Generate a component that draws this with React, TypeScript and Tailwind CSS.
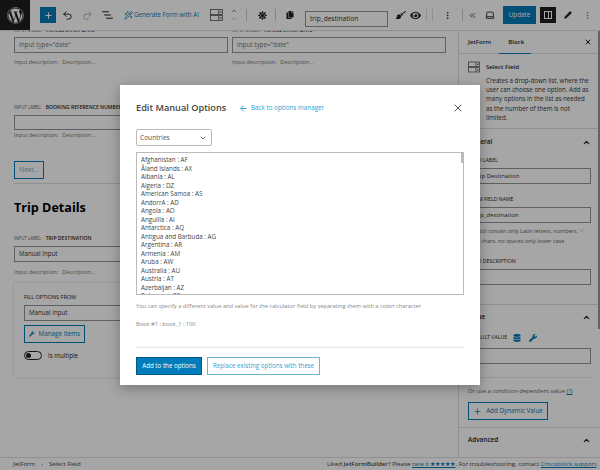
import { Undo2, Redo2, WandSparkles, ChevronUp, ChevronDown, ChevronsLeft, Laptop, EllipsisVertical, X, ArrowLeft, Plus, Pencil } from "lucide-react";
import { FaWordpress, FaWrench, FaDatabase, FaBroom, FaEye, FaSun, FaCopy } from "react-icons/fa";

const COUNTRIES = [
  "Afghanistan : AF",
  "Åland Islands : AX",
  "Albania : AL",
  "Algeria : DZ",
  "American Samoa : AS",
  "AndorrA : AD",
  "Angola : AO",
  "Anguilla : AI",
  "Antarctica : AQ",
  "Antigua and Barbuda : AG",
  "Argentina : AR",
  "Armenia : AM",
  "Aruba : AW",
  "Australia : AU",
  "Austria : AT",
  "Azerbaijan : AZ",
  "Bahamas : BS",
];

// Two stacked rows with a small box each, used for the field block icon
function FieldIcon({ className }: { className: string }) {
  return (
    <svg viewBox="0 0 24 22" className={className} fill="none" stroke="currentColor" strokeWidth="1.5">
      <rect x="1" y="1" width="22" height="9" />
      <rect x="1" y="12" width="22" height="9" />
      <path d="M16 1v9M16 12v9" />
      <path d="M18 4l3 3M21 4l-3 3M18 15l3 3M21 15l-3 3" />
    </svg>
  );
}

function ListViewIcon() {
  return (
    <svg viewBox="0 0 16 12" className="w-[11px] h-[8px]" fill="none" stroke="currentColor" strokeWidth="1.6">
      <path d="M0 1h10M3 6h10M6 11h10" />
    </svg>
  );
}

function FieldLabel({ children }: { children: string }) {
  return (
    <div className="flex gap-[4px] leading-[8px] whitespace-nowrap">
      <span className="text-[4.4px] text-[#666]">INPUT LABEL:</span>
      <span className="text-[5.1px] font-semibold text-[#1e1e1e]">{children}</span>
    </div>
  );
}

function Description() {
  return (
    <div className="flex gap-[4px] text-[5.4px] leading-[8px] text-[#757575]">
      <span>Input description:</span>
      <span>Description...</span>
    </div>
  );
}

function DateField() {
  return (
    <div className="w-[214px] shrink-0">
      <FieldLabel>TRAVEL START DATE</FieldLabel>
      <div className="mt-[3px] h-[16px] border border-[#949494] px-[4px] flex items-center text-[6.3px] text-[#757575]">
        Input type="date"
      </div>
      <div className="mt-[5px]">
        <Description />
      </div>
    </div>
  );
}

function TopBar() {
  return (
    <header className="h-[31px] shrink-0 flex items-center border-b border-[#ddd] bg-white text-[#1e1e1e]">
      <div className="w-[30px] h-[30px] bg-[#1e1e1e] flex items-center justify-center text-white">
        <FaWordpress size={17} />
      </div>
      <div className="ml-[10px] w-[16px] h-[16px] bg-[#007cba] flex items-center justify-center text-white">
        <Plus size={9} strokeWidth={3} />
      </div>
      <Undo2 size={11} className="ml-[6px]" />
      <Redo2 size={11} className="ml-[9px] text-[#aaa]" />
      <div className="ml-[9px] flex">
        <ListViewIcon />
      </div>
      <WandSparkles size={9} className="ml-[11px] text-[#007cba]" />
      <span className="ml-[1px] w-[64px] text-[6.2px] text-[#007cba] whitespace-nowrap">Generate Form with AI</span>
      <FieldIcon className="ml-[12px] w-[13px] h-[12px] text-[#555]" />
      <div className="ml-[7px] flex flex-col items-center text-[#555]">
        <ChevronUp size={8} />
        <ChevronDown size={8} className="text-[#aaa]" />
      </div>
      <div className="ml-[8px] w-px h-[12px] bg-[#ccc]" />
      <FaSun size={9} className="ml-[11px]" />
      <div className="ml-[8px] w-px h-[12px] bg-[#ccc]" />
      <FaCopy size={8} className="ml-[10px]" />
      <div className="ml-[11px] mt-[7px] w-[83px] h-[16px] border border-[#949494] px-[4px] flex items-center text-[6.6px] text-[#333]">
        trip_destination
      </div>
      <FaBroom size={10} className="ml-[8px]" />
      <FaEye size={11} className="ml-[4px] text-[#333]" />
      <div className="ml-[5px] w-px h-[12px] bg-[#ddd]" />
      <div className="ml-[5px] w-px h-[12px] bg-[#ddd]" />
      <EllipsisVertical size={9} className="ml-[10px]" />
      <div className="ml-[10px] w-px h-[12px] bg-[#ccc]" />
      <ChevronsLeft size={9} className="ml-[5px]" />
      <Laptop size={10} className="ml-[8px]" />
      <div className="ml-[8px] w-[33px] h-[18px] bg-[#007cba] text-white text-[6.3px] flex items-center justify-center">
        Update
      </div>
      <div className="ml-[4px] w-[16px] h-[16px] bg-[#1e1e1e] flex items-center justify-center">
        <div className="w-[8px] h-[8px] border border-white flex justify-end">
          <div className="w-[3px] border-l border-white" />
        </div>
      </div>
      <Pencil size={8} className="ml-[8px]" fill="currentColor" />
      <EllipsisVertical size={9} className="ml-[11px] text-[#777]" />
    </header>
  );
}

function Editor() {
  return (
    <main className="w-[459px] shrink-0 overflow-hidden px-[14px] border-r border-[#ddd] bg-white">
      <div className="-mt-[5px] flex gap-[4px]">
        <DateField />
        <DateField />
      </div>
      <div className="mt-[37px]">
        <FieldLabel>BOOKING REFERENCE NUMBER</FieldLabel>
      </div>
      <div className="mt-[4px] w-[300px] h-[15px] border border-[#949494]" />
      <div className="mt-[1px]">
        <Description />
      </div>
      <div className="mt-[22px] w-[30px] h-[18px] border border-[#007cba] flex items-center justify-center text-[6.5px] text-[#7a9fb5]">
        Next...
      </div>
      <div className="mt-[4px] h-px bg-[#ddd]" />
      <h2 className="mt-[14px] text-[12.6px] leading-[20px] font-bold text-black">Trip Details</h2>
      <div className="mt-[16px]">
        <FieldLabel>TRIP DESTINATION</FieldLabel>
      </div>
      <div className="mt-[4px] h-[16px] border border-[#949494] px-[4px] flex items-center text-[6.2px] text-[#333]">
        Manual Input
      </div>
      <div className="mt-[6px]">
        <Description />
      </div>
      <section className="mt-[7px] h-[94px] px-[10px] pt-[10px] shadow-[0_0_3px_rgba(0,0,0,0.15)]">
        <div className="text-[5.5px] leading-[8px] text-[#1e1e1e]">FILL OPTIONS FROM</div>
        <div className="mt-[4px] h-[16px] border border-[#949494] px-[4px] flex items-center text-[6.2px] text-[#333]">
          Manual Input
        </div>
        <div className="mt-[4px] w-[61px] h-[18px] border border-[#007cba] flex items-center gap-[4px] px-[4px] text-[6.3px] text-[#007cba] whitespace-nowrap">
          <FaWrench size={8} />
          Manage Items
        </div>
        <div className="mt-[8px] flex items-center gap-[6px]">
          <div className="w-[18px] h-[9px] rounded-full border border-[#1e1e1e] flex items-center px-[1px]">
            <div className="w-[5px] h-[5px] rounded-full bg-[#1e1e1e]" />
          </div>
          <span className="text-[6.2px] text-[#1e1e1e]">Is multiple</span>
        </div>
      </section>
    </main>
  );
}

function SidebarInput({ value }: { value?: string }) {
  return (
    <div className="mt-[4px] h-[16px] border border-[#949494] px-[5px] flex items-center text-[6.1px] text-[#333] whitespace-nowrap">
      {value}
    </div>
  );
}

function SectionHead({ title }: { title: string }) {
  return (
    <div className="flex items-center justify-between text-[6.4px] leading-[12px] font-semibold text-[#1e1e1e]">
      {title}
      <ChevronUp size={9} strokeWidth={3} />
    </div>
  );
}

function Sidebar() {
  return (
    <aside className="relative flex-1 min-w-0 overflow-hidden bg-white text-[#1e1e1e]">
      <div className="h-[23px] flex items-center border-b border-[#ddd] pl-[9px] pr-[8px] text-[6.1px] font-semibold">
        <span>JetForm</span>
        <span className="relative ml-[17px] h-full flex items-center">
          Block
          <span className="absolute -left-[9px] -right-[7px] -bottom-px h-px bg-[#007cba]" />
        </span>
        <X size={8} strokeWidth={3} className="ml-auto" />
      </div>
      <div className="h-[75px] pl-[9px] pr-[5px] pt-[7px] flex gap-[6px] border-b border-[#ddd]">
        <FieldIcon className="w-[12px] h-[12px] shrink-0 text-[#555]" />
        <div>
          <div className="text-[6.1px] leading-[12px] font-semibold">Select Field</div>
          <p className="mt-[3px] text-[6.2px] leading-[9.2px] text-[#333] whitespace-nowrap">
            Creates a drop-down list, where the
            <br />
            user can choose one option. Add as
            <br />
            many options in the list as needed
            <br />
            as the number of them is not
            <br />
            limited.
          </p>
        </div>
      </div>
      <div className="px-[9px] pt-[7px]">
        <SectionHead title="General" />
        <div className="mt-[8px] text-[5.2px] leading-[8px]">FIELD LABEL</div>
        <SidebarInput value="Trip Destination" />
        <div className="mt-[11px] text-[5.2px] leading-[8px]">FORM FIELD NAME</div>
        <SidebarInput value="trip_destination" />
        <p className="mt-[4px] pr-[4px] text-[5.5px] leading-[9.6px] text-[#666]">
          Should contain only Latin letters, numbers, '-' or '_' chars, no spaces only lower case
        </p>
        <div className="mt-[11px] text-[5.2px] leading-[8px]">FIELD DESCRIPTION</div>
        <SidebarInput />
      </div>
      <div className="mt-[19px] border-t border-[#ddd] px-[9px] pt-[6px]">
        <SectionHead title="Value" />
        <div className="mt-[9px] h-[12px] flex items-center text-[5.2px]">
          DEFAULT VALUE
          <FaDatabase size={8} className="ml-[6px] text-[#007cba]" />
          <FaWrench size={8} className="ml-[8px] text-[#007cba]" />
        </div>
        <SidebarInput />
        <div className="mt-[13px] h-px bg-[#e8e8e8]" />
        <p className="mt-[9px] text-[5.8px] leading-[9px] text-[#666] whitespace-nowrap">
          Or use a condition-dependent value <span className="text-[#007cba] underline">(?)</span>
        </p>
        <div className="mt-[6px] w-[80px] h-[18px] border border-[#007cba] flex items-center justify-center gap-[4px] text-[6.3px] text-[#007cba] whitespace-nowrap">
          <Plus size={9} />
          Add Dynamic Value
        </div>
      </div>
      <div className="mt-[7px] border-t border-[#ddd] px-[9px] pt-[6px]">
        <SectionHead title="Advanced" />
        <div className="mt-[9px] text-[5.2px] leading-[8px]">PLACEHOLDER</div>
      </div>
      <div className="absolute right-0 top-0 w-[2px] h-[298px] bg-[#999]" />
    </aside>
  );
}

function Footer() {
  return (
    <footer className="h-[13px] shrink-0 flex items-center justify-between border-t border-[#ddd] bg-white pl-[13px] pr-[2px] text-[6.1px] text-[#444] whitespace-nowrap">
      <div className="flex items-center gap-[6px]">
        <span>JetForm</span>
        <span>›</span>
        <span>Select Field</span>
      </div>
      <div>
        Liked <span className="font-semibold">JetFormBuilder</span>? Please{" "}
        <span className="text-[#007cba] underline">rate it ★★★★★</span>. For troubleshooting, contact{" "}
        <span className="text-[#007cba] underline">Crocoblock support</span>.
      </div>
    </footer>
  );
}

function OptionsModal() {
  return (
    <div className="absolute inset-0 bg-black/35 flex items-center justify-center">
      <div className="w-[360px] h-[300px] bg-white px-[16px] pt-[17px] shadow-[0_3px_12px_rgba(0,0,0,0.3)]">
        <div className="h-[12px] flex items-center">
          <h1 className="w-[90px] text-[9.2px] font-semibold text-[#444] whitespace-nowrap">Edit Manual Options</h1>
          <ArrowLeft size={9} strokeWidth={2.5} className="ml-[13px] text-[#2f9fd0]" />
          <span className="ml-[3px] text-[6.3px] text-[#2f9fd0] whitespace-nowrap">Back to options manager</span>
          <X size={12} strokeWidth={1.5} className="ml-auto text-[#1e1e1e]" />
        </div>
        <div className="mt-[15px] w-[76px] h-[17px] rounded-[2px] border border-[#bbb] pl-[3px] pr-[4px] flex items-center justify-between text-[6.6px] text-[#555]">
          Countries
          <ChevronDown size={8} strokeWidth={2.5} />
        </div>
        <div className="relative mt-[6px] h-[143px] border border-[#bbb] overflow-hidden pl-[4px] pt-[3px] text-[6.25px] leading-[8.5px] text-[#444]">
          {COUNTRIES.map((c) => (
            <div key={c}>{c}</div>
          ))}
          <div className="absolute right-0 top-0 w-[2px] h-[10px] bg-[#bbb]" />
        </div>
        <p className="mt-[7px] text-[5.7px] leading-[9px] text-[#888] whitespace-nowrap">
          You can specify a different value and value for the calculator field by separating them with a colon character
        </p>
        <p className="mt-[9px] text-[5.7px] leading-[9px] text-[#888]">Book #1 : book_1 : 100</p>
        <div className="mt-[18px] h-px bg-[#e6e6e6]" />
        <div className="mt-[9px] flex gap-[5px] text-[6.2px] whitespace-nowrap">
          <button className="w-[66px] h-[18px] bg-[#007cba] border border-[#005a87] text-white flex items-center justify-center">
            Add to the options
          </button>
          <button className="w-[113px] h-[18px] border border-[#6db3d6] text-[#2f9fd0] flex items-center justify-center">
            Replace existing options with these
          </button>
        </div>
      </div>
    </div>
  );
}

export default function App() {
  return (
    <div
      className="relative w-[600px] h-[470px] overflow-hidden flex flex-col bg-white"
      style={{ fontFamily: '"Open Sans", "Noto Sans", sans-serif' }}
    >
      <TopBar />
      <div className="flex-1 min-h-0 flex overflow-hidden">
        <Editor />
        <Sidebar />
      </div>
      <Footer />
      <OptionsModal />
    </div>
  );
}
